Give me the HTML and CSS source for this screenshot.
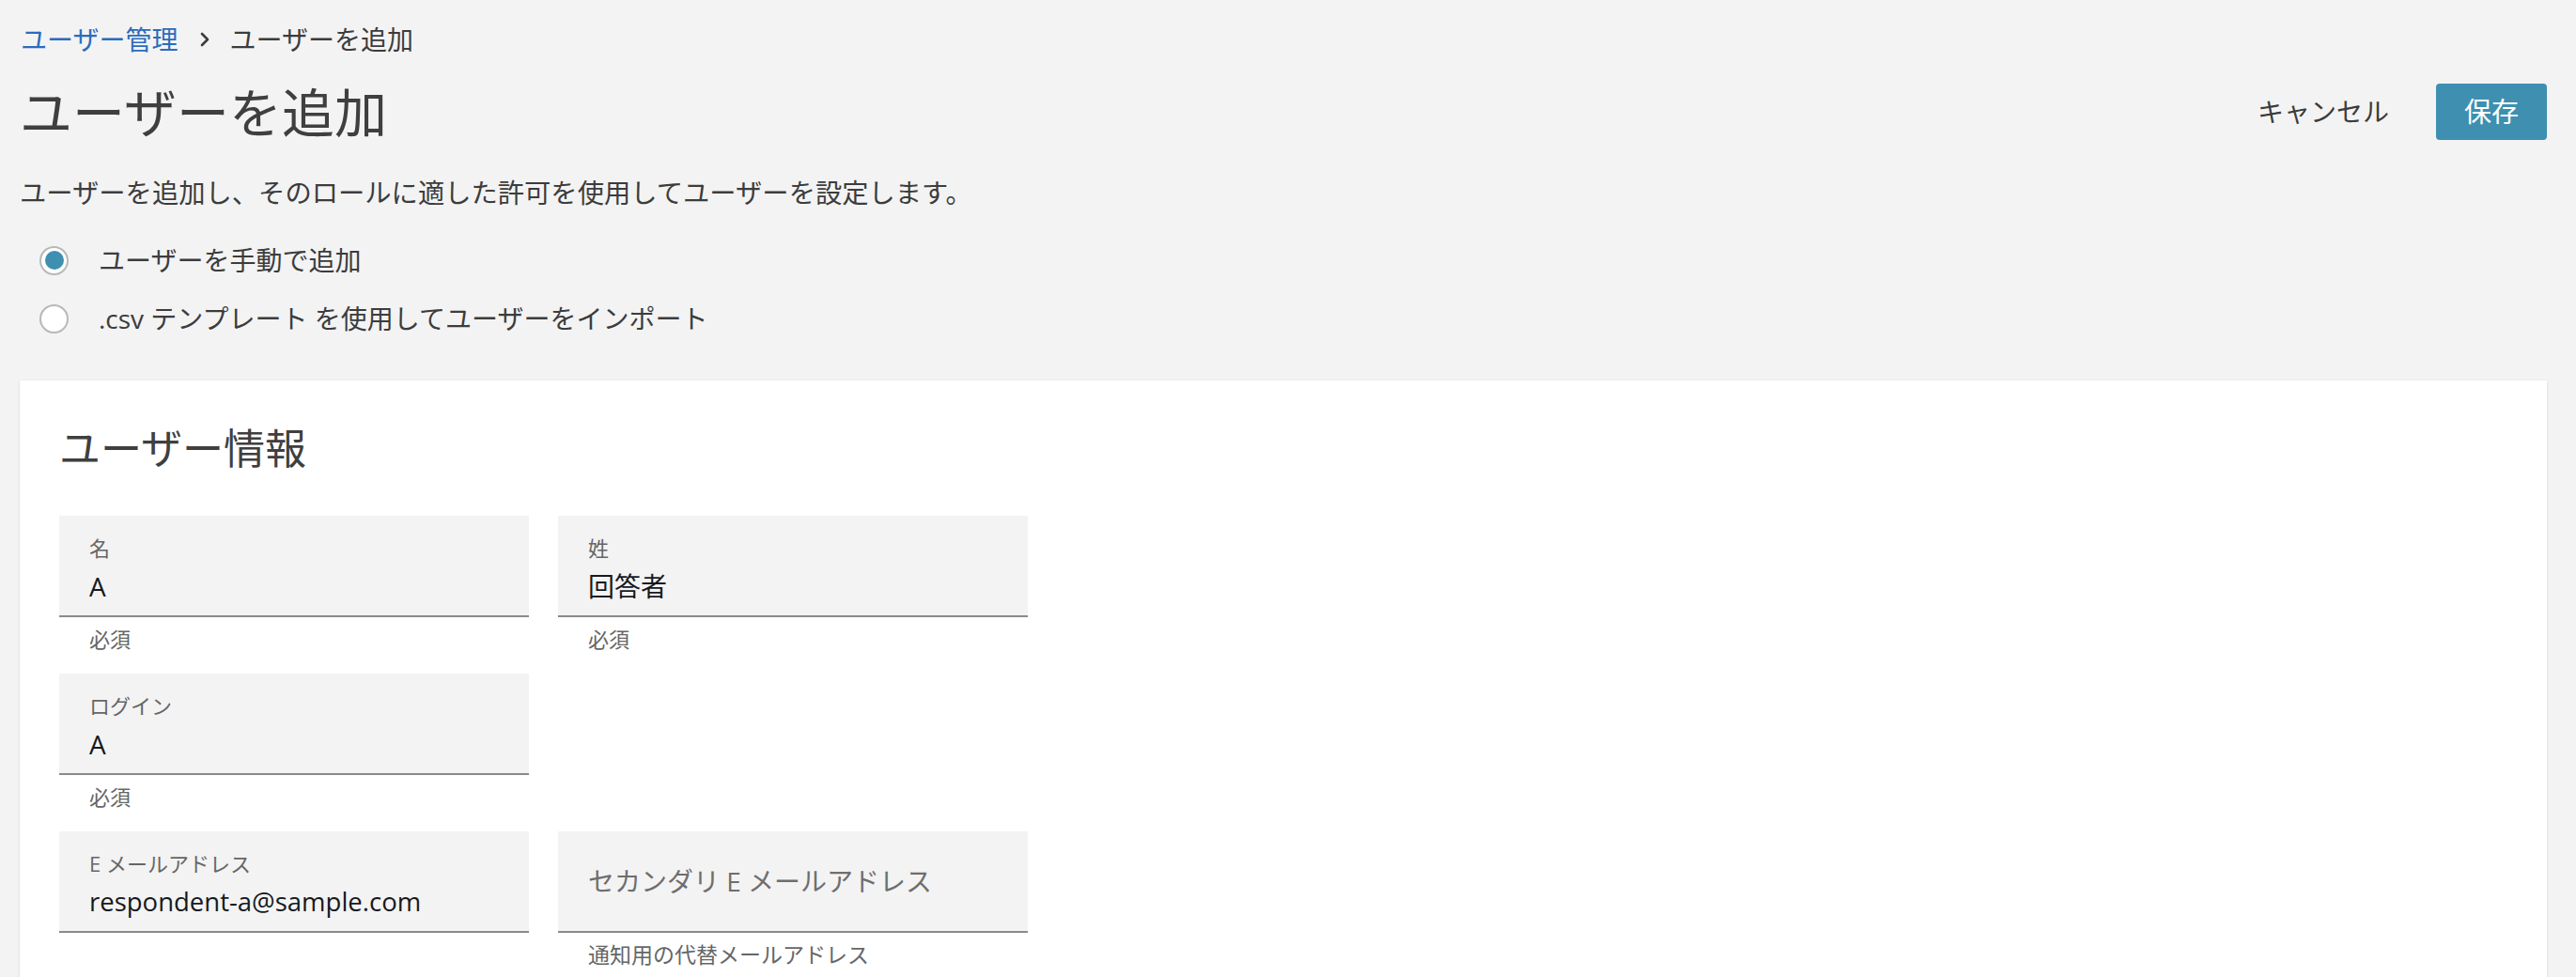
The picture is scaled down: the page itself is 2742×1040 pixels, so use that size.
FILE: index.html
```html
<!DOCTYPE html>
<html lang="ja">
<head>
<meta charset="utf-8">
<title>ユーザーを追加</title>
<link rel="stylesheet" href="styles.css">
</head>
<body>
<div class="page">
  <nav class="crumbs">
    <a class="crumb-link" href="#">ユーザー管理</a>
    <svg class="chev" viewBox="0 0 12 16" width="12" height="16" aria-hidden="true"><path d="M3 2 L9 8 L3 14" fill="none" stroke="#3c3c3c" stroke-width="2.6" stroke-linecap="round" stroke-linejoin="round"/></svg>
    <span class="crumb-current">ユーザーを追加</span>
  </nav>

  <header class="head">
    <h1 class="title">ユーザーを追加</h1>
    <div class="actions">
      <button class="btn-text" type="button">キャンセル</button>
      <button class="btn-primary" type="button">保存</button>
    </div>
  </header>

  <p class="desc">ユーザーを追加し、そのロールに適した許可を使用してユーザーを設定します。</p>

  <div class="radios">
    <label class="radio"><span class="radio-mark is-checked"></span><span class="radio-text">ユーザーを手動で追加</span></label>
    <label class="radio"><span class="radio-mark"></span><span class="radio-text">.csv テンプレート を使用してユーザーをインポート</span></label>
  </div>

  <section class="card">
    <h2 class="card-title">ユーザー情報</h2>
    <div class="grid">
      <div class="fieldwrap">
        <div class="field">
          <div class="field-label">名</div>
          <div class="field-value">A</div>
        </div>
        <div class="helper">必須</div>
      </div>
      <div class="fieldwrap">
        <div class="field">
          <div class="field-label">姓</div>
          <div class="field-value">回答者</div>
        </div>
        <div class="helper">必須</div>
      </div>
      <div class="fieldwrap">
        <div class="field">
          <div class="field-label">ログイン</div>
          <div class="field-value">A</div>
        </div>
        <div class="helper">必須</div>
      </div>
      <div class="fieldwrap"></div>
      <div class="fieldwrap">
        <div class="field">
          <div class="field-label">E メールアドレス</div>
          <div class="field-value field-value-latin">respondent-a@sample.com</div>
        </div>
      </div>
      <div class="fieldwrap">
        <div class="field field-empty">
          <div class="placeholder">セカンダリ E メールアドレス</div>
        </div>
        <div class="helper helper-wide">通知用の代替メールアドレス</div>
      </div>
    </div>
  </section>
</div>
</body>
</html>
```

FILE: styles.css
```css
html, body {
  margin: 0;
  padding: 0;
  background: #f3f3f3;
}

body {
  font-family: "Open Sans", "Noto Sans CJK JP", "Noto Sans", sans-serif;
  color: #3c3c3c;
}

.page {
  padding: 22px 31px 0 21px;
}

.crumbs {
  display: flex;
  align-items: center;
  height: 40px;
  font-size: 28px;
  line-height: 40px;
  padding-left: 1px;
}

.crumb-link {
  color: #2b6cbd;
  text-decoration: none;
}

.chev {
  margin: 0 20px 0 23px;
}

.crumb-current {
  color: #3c3c3c;
}

.head {
  display: flex;
  align-items: center;
  justify-content: space-between;
  margin-top: 23px;
}

.title {
  margin: 0;
  font-size: 56px;
  line-height: 68px;
  font-weight: 400;
  color: #3f3f3f;
}

.actions {
  display: flex;
  align-items: center;
}

.btn-text {
  font-family: inherit;
  font-size: 28px;
  line-height: 40px;
  color: #3c3c3c;
  background: none;
  border: 0;
  padding: 0 24px;
  margin-right: 26px;
}

.btn-primary {
  font-family: inherit;
  font-size: 29px;
  line-height: 40px;
  height: 60px;
  width: 118px;
  color: #ffffff;
  background: #3e8fb0;
  border: 0;
  border-radius: 4px;
  padding: 0;
}

.desc {
  margin: 32px 0 0 0;
  font-size: 28.3px;
  line-height: 40px;
  color: #3c3c3c;
}

.radios {
  margin-top: 32px;
  display: flex;
  flex-direction: column;
  gap: 22px;
}

.radio {
  display: flex;
  align-items: center;
  height: 40px;
  font-size: 28px;
  line-height: 40px;
  color: #3c3c3c;
}

.radio-mark {
  box-sizing: border-box;
  width: 31px;
  height: 31px;
  margin-left: 21px;
  margin-right: 32px;
  border: 2px solid #b8b8b8;
  border-radius: 50%;
  background: #ffffff;
  display: flex;
  align-items: center;
  justify-content: center;
}

.radio-mark.is-checked::after {
  content: "";
  width: 20px;
  height: 20px;
  border-radius: 50%;
  background: #3e8fb0;
}

.card {
  margin-top: 46px;
  background: #ffffff;
  box-shadow: 0 1px 3px rgba(0, 0, 0, 0.12);
  padding: 44px 42px 60px 42px;
}

.card-title {
  margin: 0;
  font-size: 44px;
  line-height: 56px;
  font-weight: 400;
  color: #3f3f3f;
}

.grid {
  margin-top: 44px;
  display: grid;
  grid-template-columns: 500px 500px;
  column-gap: 31px;
  row-gap: 21px;
}

.fieldwrap {
  display: flex;
  flex-direction: column;
}

.field {
  box-sizing: border-box;
  height: 108px;
  padding: 18px 32px 0 32px;
  background: #f3f3f3;
  border-bottom: 2px solid #8a8a8a;
}

.field-label {
  font-size: 22px;
  line-height: 32px;
  color: #666666;
}

.field-value {
  margin-top: 3px;
  font-size: 28px;
  line-height: 44px;
  color: #16191f;
}

.field-value-latin {
  font-size: 27.5px;
}

.field-empty {
  padding-top: 0;
  display: flex;
  align-items: center;
}

.placeholder {
  font-size: 28px;
  line-height: 40px;
  color: #6e6e6e;
}

.helper {
  margin-top: 7px;
  padding-left: 32px;
  font-size: 22px;
  line-height: 32px;
  color: #666666;
}

.helper-wide {
  font-size: 23px;
}
```
